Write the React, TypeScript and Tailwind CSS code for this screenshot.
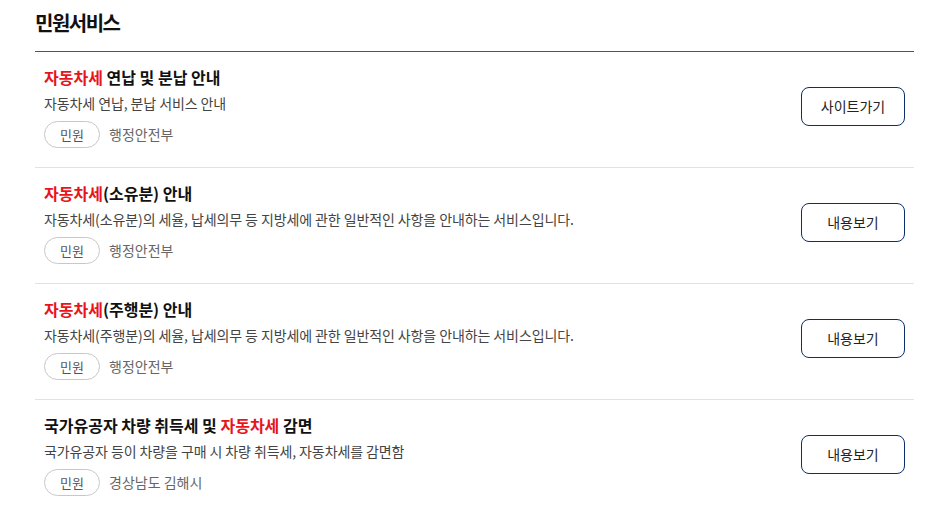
const items = [
  {
    title: [<span key="r" className="text-[#e8141c]">자동차세</span>, ' 연납 및 분납 안내'],
    desc: '자동차세 연납, 분납 서비스 안내',
    org: '행정안전부',
    button: '사이트가기',
  },
  {
    title: [<span key="r" className="text-[#e8141c]">자동차세</span>, '(소유분) 안내'],
    desc: '자동차세(소유분)의 세율, 납세의무 등 지방세에 관한 일반적인 사항을 안내하는 서비스입니다.',
    org: '행정안전부',
    button: '내용보기',
  },
  {
    title: [<span key="r" className="text-[#e8141c]">자동차세</span>, '(주행분) 안내'],
    desc: '자동차세(주행분)의 세율, 납세의무 등 지방세에 관한 일반적인 사항을 안내하는 서비스입니다.',
    org: '행정안전부',
    button: '내용보기',
  },
  {
    title: ['국가유공자 차량 취득세 및 ', <span key="r" className="text-[#e8141c]">자동차세</span>, ' 감면'],
    desc: '국가유공자 등이 차량을 구매 시 차량 취득세, 자동차세를 감면함',
    org: '경상남도 김해시',
    button: '내용보기',
  },
]

const App = () => {
  return (
    <div
      className="w-[936px] h-[513px] bg-white overflow-hidden pl-[35px] pr-[22px]"
      style={{ fontFamily: '"Noto Sans CJK KR", "Noto Sans", sans-serif' }}
    >
      <h2 className="pt-[8px] pb-[13px] text-[20px] leading-[30px] font-bold text-[#111] tracking-[-1.5px] border-b border-[#555]">
        민원서비스
      </h2>

      {items.map((item, i) => (
        <div
          key={i}
          className="flex items-center justify-between pl-[9px] pr-[9px] pt-[11px] pb-[17px] border-b border-[#e2e2e2] h-[116px]"
        >
          <div className="flex flex-col">
            <p className="text-[16px] leading-[24px] font-bold text-[#111]">{item.title}</p>
            <p className="mt-[4px] text-[14px] leading-[20px] text-[#444] tracking-[-0.1px]">{item.desc}</p>
            <div className="mt-[8px] flex items-center gap-[9px]">
              <span className="flex items-center justify-center w-[56px] h-[27px] rounded-full border border-[#c8c8c8] text-[13px] text-[#555]">
                민원
              </span>
              <span className="text-[14px] text-[#666]">{item.org}</span>
            </div>
          </div>
          <button className="w-[104px] h-[39px] rounded-[8px] border border-[#0b2f6a] text-[14px] text-[#222] bg-white">
            {item.button}
          </button>
        </div>
      ))}
    </div>
  )
}

export default App
